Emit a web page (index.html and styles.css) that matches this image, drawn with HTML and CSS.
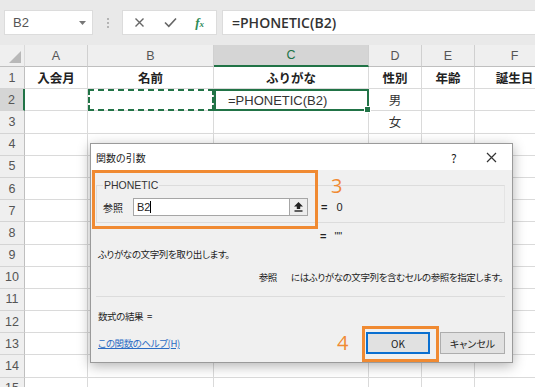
FILE: index.html
```html
<!DOCTYPE html>
<html lang="ja">
<head>
    <meta charset="UTF-8">
    <title>PHONETIC 関数の引数</title>
    <link rel="stylesheet" href="styles.css">
</head>
<body>
    <div class="app">
        <div class="formula-bar">
            <div class="name-box">
                <span>B2</span>
                <svg class="caret" width="7" height="4" viewBox="0 0 7 4"><path d="M0 0h7L3.5 4z" fill="#777"/></svg>
            </div>
            <div class="grip"><i></i><i></i><i></i></div>
            <div class="fx-box">
                <svg width="11" height="11" viewBox="0 0 11 11"><path d="M1.5 1.5l8 8M9.5 1.5l-8 8" stroke="#666" stroke-width="1.4"/></svg>
                <svg width="13" height="11" viewBox="0 0 13 11"><path d="M1 5.5l3.8 3.8L12 1.5" stroke="#666" stroke-width="1.6" fill="none"/></svg>
                <span class="fx">f<small>x</small></span>
            </div>
            <div class="formula-input">=PHONETIC(B2)</div>
        </div>

        <div class="sheet">
            <div class="corner"><svg width="12" height="12" viewBox="0 0 12 12"><path d="M12 0v12H0z" fill="#b8b8b8"/></svg></div>
            <div class="ch">A</div><div class="ch">B</div><div class="ch sel">C</div><div class="ch">D</div><div class="ch">E</div><div class="ch">F</div>

            <div class="rh">1</div><div class="c bold">入会月</div><div class="c bold">名前</div><div class="c bold">ふりがな</div><div class="c bold">性別</div><div class="c bold">年齢</div><div class="c bold">誕生日</div>
            <div class="rh sel">2</div><div class="c"></div><div class="c copy"></div><div class="c active">=PHONETIC(B2)<span class="handle"></span></div><div class="c">男</div><div class="c"></div><div class="c"></div>
            <div class="rh">3</div><div class="c"></div><div class="c"></div><div class="c"></div><div class="c">女</div><div class="c"></div><div class="c"></div>
            <div class="rh">4</div><div class="c"></div><div class="c"></div><div class="c"></div><div class="c"></div><div class="c"></div><div class="c"></div>
            <div class="rh">5</div><div class="c"></div><div class="c"></div><div class="c"></div><div class="c"></div><div class="c"></div><div class="c"></div>
            <div class="rh">6</div><div class="c"></div><div class="c"></div><div class="c"></div><div class="c"></div><div class="c"></div><div class="c"></div>
            <div class="rh">7</div><div class="c"></div><div class="c"></div><div class="c"></div><div class="c"></div><div class="c"></div><div class="c"></div>
            <div class="rh">8</div><div class="c"></div><div class="c"></div><div class="c"></div><div class="c"></div><div class="c"></div><div class="c"></div>
            <div class="rh">9</div><div class="c"></div><div class="c"></div><div class="c"></div><div class="c"></div><div class="c"></div><div class="c"></div>
            <div class="rh">10</div><div class="c"></div><div class="c"></div><div class="c"></div><div class="c"></div><div class="c"></div><div class="c"></div>
            <div class="rh">11</div><div class="c"></div><div class="c"></div><div class="c"></div><div class="c"></div><div class="c"></div><div class="c"></div>
            <div class="rh">12</div><div class="c"></div><div class="c"></div><div class="c"></div><div class="c"></div><div class="c"></div><div class="c"></div>
            <div class="rh">13</div><div class="c"></div><div class="c"></div><div class="c"></div><div class="c"></div><div class="c"></div><div class="c"></div>
            <div class="rh">14</div><div class="c"></div><div class="c"></div><div class="c"></div><div class="c"></div><div class="c"></div><div class="c"></div>
            <div class="rh">15</div><div class="c"></div><div class="c"></div><div class="c"></div><div class="c"></div><div class="c"></div><div class="c"></div>
        </div>

        <!-- 関数の引数ダイアログ -->
        <div class="dialog">
            <div class="dlg-title">
                <span class="dlg-caption">関数の引数</span>
                <span class="dlg-help">?</span>
                <svg class="dlg-close" width="11" height="11" viewBox="0 0 11 11"><path d="M1 1l9 9M10 1l-9 9" stroke="#333" stroke-width="1.2"/></svg>
            </div>
            <div class="dlg-body">
                <fieldset class="args">
                    <legend>PHONETIC</legend>
                    <div class="arg-row">
                        <span class="arg-name">参照</span>
                        <div class="ref-field">
                            <span class="ref-text">B2<i class="cursor"></i></span>
                            <span class="ref-btn">
                                <svg width="9" height="10" viewBox="0 0 9 10"><path d="M4.5 0L9 4.5H6.2V7H2.8V4.5H0z" fill="#222"/><rect x="0.5" y="8.3" width="8" height="1.4" fill="#222"/></svg>
                            </span>
                        </div>
                        <span class="eq">=</span><span class="val">0</span>
                    </div>
                </fieldset>
                <div class="result-line"><span class="eq">=</span><span class="val">""</span></div>
                <p class="fn-desc">ふりがなの文字列を取り出します。</p>
                <p class="arg-desc"><b>参照</b>にはふりがなの文字列を含むセルの参照を指定します。</p>
                <div class="dlg-sep"></div>
                <p class="result">数式の結果 <span class="result-eq">=</span></p>
                <div class="dlg-foot">
                    <a class="help-link" href="#">この関数のヘルプ(H)</a>
                    <button class="btn btn-ok">OK</button>
                    <button class="btn">キャンセル</button>
                </div>
            </div>
        </div>

        <!-- 手順の注釈 -->
        <div class="mark mark-ref"></div>
        <span class="step step-3">3</span>
        <div class="mark mark-ok"></div>
        <span class="step step-4">4</span>
    </div>
</body>
</html>
```

FILE: styles.css
```css
body {
    margin: 0;
    font-family: 'Liberation Sans', 'Noto Sans CJK JP', sans-serif;
    color: #333;
    background-color: #fff;
}
.app {
    position: relative;
    width: 535px;
    height: 387px;
    overflow: hidden;
}

/* 数式バー */
.formula-bar {
    height: 45px;
    box-sizing: border-box;
    padding: 10px 0 10px 4px;
    background-color: #e9e9e9;
    display: flex;
    align-items: stretch;
}
.name-box {
    width: 89px;
    box-sizing: border-box;
    background-color: #fff;
    border: 1px solid #dcdcdc;
    display: flex;
    align-items: center;
    justify-content: space-between;
    padding: 0 6px 0 8px;
    font-size: 13px;
    color: #555;
}
.grip {
    width: 29px;
    display: flex;
    flex-direction: column;
    align-items: center;
    justify-content: center;
    gap: 2px;
}
.grip i {
    width: 2px;
    height: 2px;
    background-color: #b4b4b4;
}
.fx-box {
    width: 95px;
    box-sizing: border-box;
    background-color: #fff;
    border: 1px solid #dcdcdc;
    display: flex;
    align-items: center;
    justify-content: space-between;
    padding: 0 12px 0 11px;
}
.fx {
    font-family: 'Liberation Serif', serif;
    font-style: italic;
    font-weight: bold;
    font-size: 13px;
    color: #2e8b57;
}
.fx small {
    font-size: 9px;
}
.formula-input {
    flex: 1;
    margin-left: 5px;
    background-color: #fff;
    border: 1px solid #dcdcdc;
    border-right: none;
    display: flex;
    align-items: center;
    padding-left: 9px;
    font-family: 'Open Sans', sans-serif;
    font-weight: 600;
    font-size: 14px;
    color: #333;
}

/* シート */
.sheet {
    display: grid;
    grid-template-columns: 25px 63px 126px 155px 53px 53px 80px;
    grid-template-rows: 22px;
    grid-auto-rows: 22.2px;
    font-size: 13px;
}
.sheet > div {
    box-sizing: border-box;
    border-right: 1px solid #dadada;
    border-bottom: 1px solid #dadada;
    display: flex;
    align-items: center;
    justify-content: center;
    white-space: nowrap;
}
.corner {
    background-color: #efefef;
    align-items: flex-end !important;
    justify-content: flex-end !important;
    padding: 0 3px 3px 0;
    border-bottom-color: #bfbfbf !important;
}
.ch {
    background-color: #efefef;
    color: #555;
    font-size: 12.5px;
    border-right-color: #d0d0d0 !important;
    border-bottom-color: #bfbfbf !important;
}
.ch.sel {
    background-color: #d5d5d5;
    color: #217346;
    border-bottom: 2px solid #217346 !important;
}
.rh {
    background-color: #efefef;
    color: #555;
    font-size: 12.5px;
    border-right-color: #bfbfbf !important;
    border-bottom-color: #d4d4d4 !important;
}
.rh.sel {
    background-color: #d5d5d5;
    border-right: 2px solid #217346 !important;
}
.c.bold {
    font-family: 'Noto Sans CJK JP', sans-serif;
    font-weight: bold;
    font-size: 12.5px;
    color: #222;
}
.c {
    font-family: 'Noto Sans CJK JP', sans-serif;
    font-size: 12.5px;
}
.c.copy {
    outline: 2px dashed #217346;
    outline-offset: -2px;
}
.c.active {
    position: relative;
    justify-content: flex-start;
    padding-left: 12px;
    border: 2px solid #217346 !important;
    font-family: 'Liberation Sans', sans-serif;
    font-size: 13px;
}
.handle {
    position: absolute;
    right: -4px;
    bottom: -4px;
    width: 5px;
    height: 5px;
    background-color: #217346;
    border: 1px solid #fff;
}

/* ダイアログ */
.dialog {
    position: absolute;
    left: 90px;
    top: 143px;
    width: 423px;
    height: 220px;
    box-sizing: border-box;
    border: 1px solid #9a9a9a;
    background-color: #f0f0f0;
    box-shadow: 0 3px 12px rgba(0,0,0,0.3);
    font-family: 'Noto Sans CJK JP', sans-serif;
    font-size: 10px;
    font-feature-settings: "palt";
    color: #222;
    display: flex;
    flex-direction: column;
}
.dlg-title {
    height: 26px;
    background-color: #fff;
    display: flex;
    align-items: center;
    padding: 0 0 0 5px;
}
.dlg-caption {
    flex: 1;
}
.dlg-help {
    font-size: 12px;
    width: 35px;
}
.dlg-close {
    margin-right: 15px;
}
.dlg-body {
    flex: 1;
    padding: 9px 7px 0 5px;
    display: flex;
    flex-direction: column;
}
.args {
    margin: 0;
    padding: 0 5px 6px 6px;
    border: 1px solid #dcdcdc;
    border-right-color: #e4e4e4;
}
.args legend {
    padding: 0 1px;
    font-family: 'Liberation Sans', sans-serif;
    font-size: 10.5px;
    color: #333;
}
.arg-row {
    display: flex;
    align-items: center;
    margin-top: 7px;
}
.arg-name {
    width: 30px;
}
.ref-field {
    width: 175px;
    height: 18px;
    box-sizing: border-box;
    background-color: #fff;
    border: 1px solid #a6a6a6;
    display: flex;
}
.ref-text {
    flex: 1;
    display: flex;
    align-items: center;
    padding-left: 3px;
    font-family: 'Liberation Sans', sans-serif;
    font-size: 11px;
}
.cursor {
    width: 1px;
    height: 12px;
    background-color: #000;
}
.ref-btn {
    width: 17px;
    border-left: 1px solid #a6a6a6;
    background-color: #ededed;
    display: flex;
    align-items: center;
    justify-content: center;
}
.eq {
    margin-left: 13px;
    font-family: 'Liberation Sans', sans-serif;
    font-size: 11px;
    font-weight: bold;
}
.val {
    margin-left: 9px;
    font-family: 'Liberation Sans', sans-serif;
    font-size: 11px;
}
.result-line {
    display: flex;
    padding-left: 211px;
    height: 14px;
    margin-top: 6px;
    align-items: center;
}
.result-line .val {
    margin-left: 8px;
}
.fn-desc,
.arg-desc,
.result,
.help-link {
    font-size: 9.5px;
    letter-spacing: -0.4px;
}
.fn-desc {
    margin: 4px 0 0 2px;
    line-height: 14px;
}
.arg-desc {
    margin: 9px 2px 0 0;
    line-height: 14px;
    text-align: right;
}
.arg-desc b {
    font-weight: normal;
    color: #111;
    margin-right: 14px;
}
.dlg-sep {
    margin-top: 12px;
    border-top: 1px solid #dcdcdc;
}
.result {
    margin: 12px 0 0 2px;
    line-height: 14px;
}
.result-eq {
    margin-left: 2px;
}
.dlg-foot {
    display: flex;
    align-items: center;
    margin-top: 9px;
}
.help-link {
    flex: 1;
    margin-left: 2px;
    color: #2b6cc4;
    text-decoration: underline;
}
.btn {
    width: 65px;
    height: 22px;
    box-sizing: border-box;
    background-color: #e1e1e1;
    border: 1px solid #adadad;
    font-family: 'Noto Sans CJK JP', sans-serif;
    font-size: 10px;
    font-feature-settings: "palt";
    color: #222;
    padding: 0;
}
.btn-ok {
    width: 64px;
    border: 2px solid #0a6fd0;
    margin-right: 10px;
}

/* 注釈 */
.mark {
    position: absolute;
    border: 3px solid #f08a32;
    box-sizing: border-box;
}
.mark-ref {
    left: 92px;
    top: 170px;
    width: 226px;
    height: 59px;
}
.mark-ok {
    left: 362px;
    top: 326px;
    width: 77px;
    height: 36px;
}
.step {
    position: absolute;
    font-family: 'Open Sans', sans-serif;
    font-size: 20px;
    line-height: 18px;
    color: #f08a32;
}
.step-3 {
    left: 331px;
    top: 177px;
}
.step-4 {
    left: 337px;
    top: 334px;
}
```
